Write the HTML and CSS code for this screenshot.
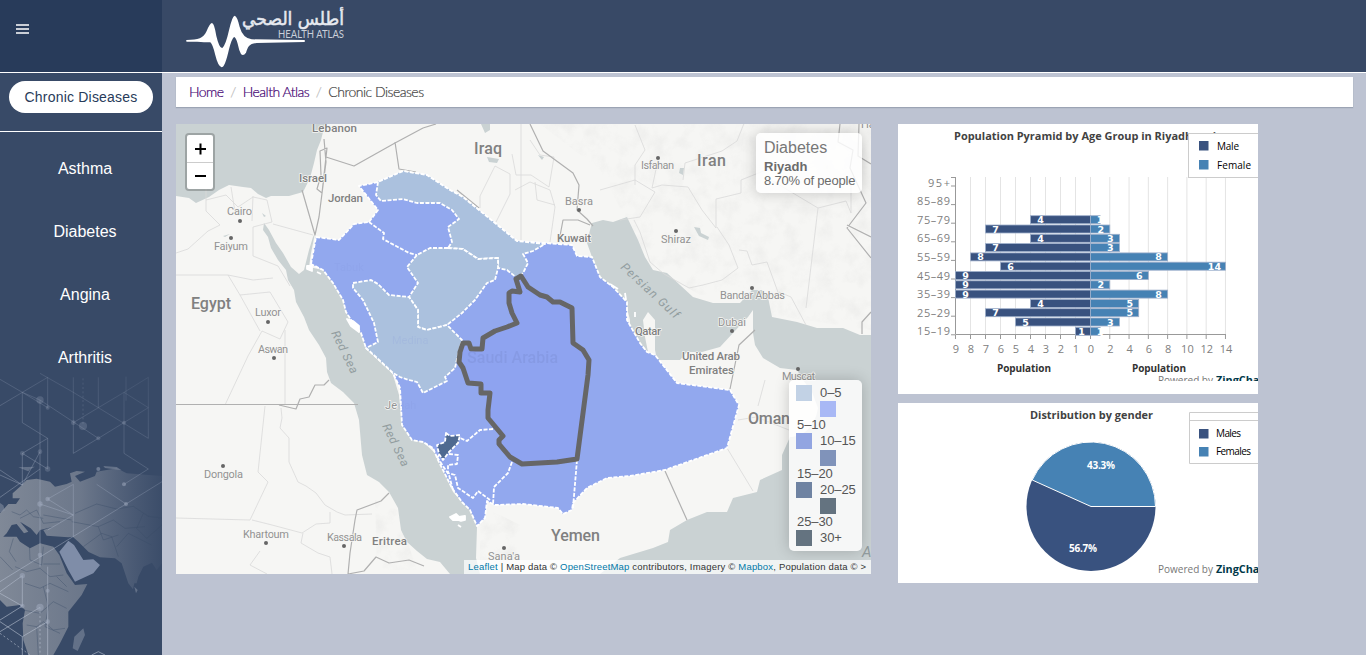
FILE: index.html
```html
<!DOCTYPE html>
<html lang="en">
<head>
<meta charset="utf-8">
<title>Health Atlas</title>
<link rel="stylesheet" href="styles.css">
</head>
<body>
<div class="app">
  <aside class="sidebar">
    <div class="menu-bar"><svg class="burger" viewBox="0 0 13 10"><path d="M0 1h13M0 5h13M0 9h13"/></svg></div>
    <div class="current"><a class="pill">Chronic Diseases</a></div>
    <nav class="nav"><a>Asthma</a><a>Diabetes</a><a>Angina</a><a>Arthritis</a></nav>
    <svg class="globe" viewBox="0 0 486 855">
      <defs>
        <linearGradient id="land" x1="0" x2="1"><stop offset="0" stop-color="#a5a9b0" stop-opacity=".66"/><stop offset=".5" stop-color="#a0a5ae" stop-opacity=".5"/><stop offset="1" stop-color="#8b93a5" stop-opacity=".04"/></linearGradient>
        <linearGradient id="net" gradientUnits="userSpaceOnUse" x1="0" y1="700" x2="380" y2="0"><stop offset="0" stop-color="#b7c0d0" stop-opacity=".6"/><stop offset="1" stop-color="#8e9ab3" stop-opacity=".13"/></linearGradient>
      </defs>
      <path fill="url(#land)" d="M0 430L25 402 48 402 60 385 38 385 38 370 60 350 80 330 110 326 150 335 165 350 200 342 215 335 210 310 230 303 255 305 225 318 240 335 285 318 290 305 350 295 380 310 486 318V580L470 600 456 578 430 590 415 620 410 640 403 640 399 658 385 640 365 580 345 565 300 562 266 546 235 515 218 500 205 502 140 497 130 480 160 470 120 480 110 495 92 475 60 455 85 485 72 490 50 462 35 465 20 490 0 510zM0 500L50 500 60 515 90 535 120 520 160 530 178 555 200 610 225 645 262 642 245 675 205 725 205 770 180 820 160 855H85L70 810 68 760 75 720 60 705 20 710 0 690z"/>
      <path fill="#8c99b4" opacity=".85" d="M178 545L205 512 222 525 250 570 280 568 300 585 280 610 225 635 205 600z"/>
      <path fill="#8e97aa" opacity=".5" d="M250 775l5 20-22 48-15-8 5-35zM55 292l50-2-15 8-5 6-12-5zM310 288l40 3 15 10-50-7zM403 650l10 10-5 10zM-2 398l12 8 5 16-17 6z"/>
      <g class="borders"><path d="M0 560l38 40M40 505l-12 40 20 30M88 520l2 50 35 15 5-55M130 582h50M45 590l35 15 40-10 30 25 40-5M75 640l45 15 30-15 55 25M70 720l50 10 40-35 40 20M80 765l30 5 20-15 30 25 35-5M110 770l5 85M130 650l15 60-10 60 45 20M200 650l-30-30M35 425l25 10 20-15 20 20 30 5M60 445l50-25 20 40 50-5M130 435l85 15M225 430l65-28 60 15 50-8 45 30 40 5M215 455l80 15 45-20 35 25 60-5M250 530l55-40 30 10 20 60M295 470l15 40 45-15M350 530l35-40 70 35M430 430l-20 45 30 30 46-40"/></g>
      <g class="network"><path d="M0 28L67 67 143 22M0 107L67 67 143 113V22M67 67V158L143 205V297L67 250V345L0 300M67 250L143 205M120 90V590M120 90L67 67M120 90L295 205 445 113 372 67V250L445 297M220 22V250L295 205M220 67L295 113 445 205V22L372 67M220 158L372 67M295 22V113M220 67L120 10M378 20V92M0 382L120 297M0 315L67 345 120 245M143 387L220 343V500M143 387L220 435 120 402M143 480L220 435M0 635L378 402 290 343M378 402L486 335M372 343L445 297M0 665L67 617V708L0 670M0 750L67 708M0 785L120 712M0 755L67 800 143 755M143 590V855M67 800V855M275 855L295 845 315 855"/><path stroke-dasharray="6 7" d="M249 25V168M120 712V855M0 790L90 855"/></g>
      <g class="nodes"><circle cx="120" cy="90" r="11"/><circle cx="249" cy="168" r="12"/><circle cx="67" cy="250" r="7"/><circle cx="120" cy="245" r="7"/><circle cx="143" cy="297" r="8"/><circle cx="220" cy="158" r="7"/><circle cx="295" cy="205" r="6"/><circle cx="143" cy="113" r="6"/><circle cx="372" cy="158" r="6"/></g>
      <g class="nodes bright"><circle cx="120" cy="402" r="8"/><circle cx="143" cy="387" r="7"/><circle cx="120" cy="555" r="7"/><circle cx="67" cy="617" r="8"/><circle cx="67" cy="708" r="7"/><circle cx="120" cy="712" r="11"/><circle cx="143" cy="755" r="7"/><circle cx="378" cy="402" r="6"/><circle cx="372" cy="343" r="6"/><circle cx="295" cy="297" r="6"/><circle cx="143" cy="662" r="6"/></g>
    </svg>
  </aside>
  <div class="page">
    <header class="header">
      <svg class="logo" viewBox="186 5 160 65">
        <path transform="translate(180 2) scale(.33333)" fill="#fff" d="M20 114C55 112 70 110 80 87Q90 63 96 63Q103 64 109 102Q118 140 127 138Q137 130 147 85Q157 41 164 41Q172 43 179 75Q188 108 215 112L373 114Q377 117 373 120L230 123C207 125 204 135 198 152Q190 164 183 156Q177 145 173 125Q167 104 162 105Q155 110 147 142Q135 196 125 196Q114 193 106 160Q98 126 91 121C80 120 50 120 20 119Q17 116 20 114z"/>
        <text class="logo-ar" x="344" y="24.500" text-anchor="end" textLength="102" lengthAdjust="spacingAndGlyphs">أطلس الصحي</text>
        <text class="logo-en" x="278" y="37.500" textLength="66" lengthAdjust="spacingAndGlyphs">HEALTH ATLAS</text>
      </svg>
    </header>
    <main class="main">
      <div class="crumbs"><a>Home</a><span class="sep">/</span><a>Health Atlas</a><span class="sep">/</span><span>Chronic Diseases</span></div>
      <div class="content">
        <section class="map">
          <svg class="map-canvas" viewBox="176 124 695 450">
            <defs><filter id="relief" x="0" y="0" width="1" height="1"><feTurbulence type="fractalNoise" baseFrequency=".06" numOctaves="4" seed="4"/><feColorMatrix values="0 0 0 0 .5 0 0 0 0 .5 0 0 0 0 .5 1.300 0 0 0 -.55"/><feComposite in2="SourceAlpha" operator="in"/></filter></defs>
            <rect x="176" y="124" width="695" height="450" fill="#f6f6f4"/>
            <g filter="url(#relief)" opacity=".22"><path fill="#fff" d="M540 124H871V330L770 315 750 290 700 295 650 265 600 170zM480 505l40 20 0 49h-40zM375 500l22 10 20 60h-40z"/></g>
            <g class="water">
              <path d="M176 124H325L321 140 317 150 314 163 310 178 303 192 289 196 271 196 266 198 258 194 251 188 243 187 229 185 219 190 209 197 196 203 189 198 176 196z"/>
              <path d="M264 223L263 230 268 237 271 248 278 260 286 270 288 280 294 290 296 302 304 317 309 330 319 345 326 358 327 372 331 383 343 392 354 403 359 420 362 455 367 475 379 482 389 492 398 508 401 530 407 542 417 551 427 559 440 562 450 574H480L476 558 477 527 470 510 453 492 437 455 423 442 412 440 402 425 399 395 393 375 388 365 376 357 366 348 361 333 353 323 346 312 343 300 333 283 323 270 309 267 311 253 315 233 313 237 309 250 304 270 299 274 291 267 283 253 276 243 269 230z"/>
              <path d="M592 223L603 220 613 222 627 217 638 240 645 257 653 270 667 273 680 285 693 297 713 303 740 303 752 290 762 290 768 297 772 317 797 322 817 328 843 328 860 335 871 335V574H600L620 558 653 548 668 542 670 530 687 520 707 512 727 512 733 498 757 492 760 480 782 470 782 455 790 437C802 437 815 428 818 408L812 392 803 380 797 370 780 368 763 358 755 345 753 333 753 310 748 317 733 333 720 347 702 352 687 352 680 360 657 360 655 350 655 320 648 312 643 320 645 337 648 352 640 343 630 327 630 320 625 300 613 287 600 277 592 257 587 243 590 230zM481 124h9l0 6-5 3zM487 157l12 2-2 4-8-1zM538 155l6 2-2 3zM694 227l6 1 1 5 8 4-1 3-9-4zM680 168l4 0-1 7-4-2zM262 213l4 3-2 1zM223 236l7-2-5 3z"/>
            </g>
            <g class="roads"><path d="M206 189v22l14 14-12 6-20 18-12 4M206 200l20-5 12 12 15-10 14 3 5 22-19 5v29l25 10 12 20M231 187l4 25M253 196l-1 25M273 224l40 11M176 275h52l12 20 20 36M228 275l25 5 20-2M240 295l30-3 18 30-8 17-18-8-14 25-23 49M285 330v74M265 406l-7 66 10 10-18 38-74-2M281 408l1 10-2 10 9 10 0 24 9 20 8 4 10 7 9 12 12 7 8 3 27-1M252 520l20 5 30 8 14-9 14-1v-11M303 533l-2 10 17 10 12 4 2 17M260 551l-10 14 17 9M521 124v120M530 140l10 15 14 2-5 30-18-12-15 0-4-21M480 208v-12l15-30 15 8 0 20-14 28M515 190l15-8 20 8 5 17-5 35M535 182l2 18 18 5M600 190l35-10 20 12-15 25-20 3M635 125l10 25-10 15 0 20M683 180l2-17 37-12 15-10 8-20M658 160l-6 28 10-3 26 2 14 23 14 18 0-29 25-6 0-13 30-12M717 227l12 18 9 23-16 12-19 5-14 3-25-14-14-12-10-30-6-12M739 250l8 1 5 14 15-3 12 33M779 292l12 5 15 28M771 180l47 28-12 100M818 208l28-7 5 12 0-35M765 380l-7 26M738 420l18-3 33 13M727 448l26 43"/></g>
            <g class="boundaries"><path d="M302 190l13 45 4-18 7-55-2-23M326 157l28 9 41-23 28-15M423 128l13-4M395 142l4 27 17 3M457 190l22 18M530 124l13 27 30 22 6 12-2 25 10 9 6 7M560 236l3-16 15 0 12 5M176 404.500h182M279 405l17 4 4-10 9-2 6-12 9 0 5-5M389 493l-8 8-24 9-2 10-5 33-2 21 16-3 12-14 13 6 20-3 15 6M665 471l22 49M730 389l9-44 16-15M859 124l-1 32 13 8M840 124l-2 18 15 8-3 18 16 35-19 25 24 30M847 225l24 12M862 334l0-12 9-10M321 175l-4 14 5 4 5-45-7 3z"/></g>
            <g class="regions">
              <path class="mid" d="M311 264L316 237 339 240 354 224 369 222 378 210 359 186 378 182 403 171 427 175 450 190 463 197 517 241 572 245 577 256 592 257 600 277 613 287 627 302 627 320 640 343 647 352 655 355 677 383 730 390 739 405 727 448 665 470 630 476 607 478 587 488 573 503 572 510 563 514 558 508 523 504 495 505 487 501 485 518 477 526 470 510 462 502 452 488 438 460 433 448 423 442 412 440 402 425 400 388 393 373 376 357 366 348 361 333 353 323 346 312 343 300 333 283 323 270z"/>
              <path class="low" d="M378 182L376 195 381 201 403 199 417 203 440 203 452 210 459 219 448 227 452 242 448 248 463 249 478 259 498 258 498 268 507 270 517 278 523 273 528 263 523 254 533 251 545 244 517 241 463 197 450 190 427 175 403 171z"/>
              <path class="low" d="M448 248L430 248 417 255 407 267 418 283 409 297 418 310 418 327 427 330 447 325 462 313 475 300 487 283 495 280 498 268 498 258 478 259 463 249z"/>
              <path class="low" d="M353 283L371 280 378 284 389 295 409 297 418 310 418 327 427 330 447 325 462 340 458 355 455 368 445 377 447 381 433 388 423 393 417 382 409 380 400 377 393 373 376 357 366 348 378 342 374 323 363 300 353 288z"/>
              <path class="line" d="M369 222L384 233 383 239 409 253 417 255M493 429L480 430 467 441 460 438M437 458l2-3M449 454l9 1-1 9-9 1v8l7 2 3 13 15 10 5-7 12 9M512 462l-4 11-14 14-1 18M577 460l-4 48M437 457l12 18 4 15"/>
              <path class="high" d="M446 433L450 436 460 435 458 443 449 452 443 460 439 454 437 445 445 442z"/>
              <path class="islands" d="M307 266l5 0 0 5-5-2zM317 272l4 2M347 319l6 2 6 5 0 6-8-6zM450 517l6-3 3 3 6-1 0 4-4 1-3-1-5 0zM458 525l3 2M610 284l8 5M625 293l1 7M635 312l0 5"/>
              <path class="selected" d="M521 276L528 287 540 295 547 297 553 302 560 302 572 308 573 343 583 350 589 360 588 375 577 459 557 462 522 464 510 457 499 444 499 440 503 436 488 418 488 410 490 393 481 393 481 384 468 383 463 368 459 362 460 352 463 343 469 343 471 349 482 349 483 338 495 331 507 327 517 323 512 313 509 303 509 293 512 291 520 292 516 279z"/>
            </g>
            <g class="places">
              <text class="country" x="191" y="309" textLength="40">Egypt</text><text class="country" x="474" y="154" textLength="28">Iraq</text><text class="country" x="697" y="166" textLength="29">Iran</text><text class="country" x="748" y="424" textLength="42">Oman</text><text class="country" x="551" y="541" textLength="49">Yemen</text>
              <text class="state" x="312" y="132" textLength="45">Lebanon</text><text class="state" x="299" y="182" textLength="28">Israel</text><text class="state" x="328" y="202" textLength="35">Jordan</text><text class="state" x="557" y="242" textLength="34">Kuwait</text><text class="state" x="635" y="335" textLength="26">Qatar</text><text class="state" x="682" y="360" textLength="58">United Arab</text><text class="state" x="689" y="374" textLength="45">Emirates</text><text class="state" x="372" y="545" textLength="35">Eritrea</text>
              <text class="city" x="227" y="215" textLength="25">Cairo</text><text class="city" x="214" y="250" textLength="34">Faiyum</text><text class="city" x="255" y="316" textLength="26">Luxor</text><text class="city" x="258" y="353" textLength="30">Aswan</text><text class="city" x="204" y="478" textLength="39">Dongola</text><text class="city" x="243" y="538" textLength="46">Khartoum</text><text class="city" x="327" y="541" textLength="35">Kassala</text><text class="city" x="565" y="205" textLength="28">Basra</text><text class="city" x="641" y="169" textLength="33">Isfahan</text><text class="city" x="661" y="243" textLength="30">Shiraz</text><text class="city" x="720" y="299" textLength="65">Bandar Abbas</text><text class="city" x="718" y="326" textLength="28">Dubai</text><text class="city" x="782" y="380" textLength="33">Muscat</text><text class="city" x="488" y="560" textLength="32">Sana'a</text><text class="city" x="385" y="409" textLength="12">Je</text><text class="city" x="861" y="128">Ha</text>
              <g class="dots"><circle cx="240" cy="221" r="2"/><circle cx="231" cy="238" r="2"/><circle cx="268" cy="322" r="2"/><circle cx="274" cy="358" r="2"/><circle cx="223" cy="466" r="2"/><circle cx="266" cy="543" r="2"/><circle cx="344" cy="546" r="2"/><circle cx="579" cy="210" r="2"/><circle cx="658" cy="158" r="2"/><circle cx="676" cy="231" r="2"/><circle cx="752" cy="288" r="2"/><circle cx="732" cy="331" r="2"/><circle cx="798" cy="369" r="2"/><circle cx="504" cy="548" r="2"/></g>
              <text class="sea" transform="translate(331 333) rotate(64)" textLength="46">Red Sea</text><text class="sea" transform="translate(382 426) rotate(64)" textLength="46">Red Sea</text><text class="sea gulf" transform="translate(620 268) rotate(43)" textLength="75">Persian Gulf</text><text class="sea big" x="862" y="557">A</text>
              <text class="ghost" x="467" y="363" textLength="91">Saudi Arabia</text><text class="ghost small" x="334" y="271">Tabuk</text><text class="ghost small" x="392" y="344">Medina</text><text class="ghost small" x="398" y="409">dah</text>
            </g>
          </svg>
          <div class="zoom"><a><svg viewBox="0 0 12 12"><path d="M1 6h11M6.500 .5v11"/></svg></a><a><svg viewBox="0 0 12 12"><path d="M1 6h11"/></svg></a></div>
          <div class="info"><h4>Diabetes</h4><b>Riyadh</b><span>8.70% of people</span></div>
          <div class="legend">
            <div class="row"><i class="c0"></i><span>0–5</span></div><div class="row shift"><i class="c1"></i></div><div class="row"><span>5–10</span></div>
            <div class="row"><i class="c2"></i><span>10–15</span></div><div class="row shift"><i class="c3"></i></div><div class="row"><span>15–20</span></div>
            <div class="row"><i class="c4"></i><span>20–25</span></div><div class="row shift"><i class="c5"></i></div><div class="row"><span>25–30</span></div>
            <div class="row"><i class="c5"></i><span>30+</span></div>
          </div>
          <div class="credit"><a>Leaflet</a> | Map data © <a>OpenStreetMap</a> contributors, Imagery © <a>Mapbox</a>, Population data © &gt;</div>
        </section>
        <section class="charts">
          <svg class="chart pyramid" viewBox="898 124 360 270">
            <text class="title" x="954" y="140" textLength="276" lengthAdjust="spacingAndGlyphs">Population Pyramid by Age Group in Riyadh region</text>
            <g id="plot"></g>
            <rect class="box" x="1188.500" y="133.500" width="80" height="44"/>
            <rect class="male" x="1199" y="141" width="9.500" height="9.500"/><rect class="female" x="1199" y="160" width="9.500" height="9.500"/>
            <text class="key" x="1217" y="150" textLength="22">Male</text><text class="key" x="1217" y="169" textLength="34">Female</text>
            <text class="axis-title" x="997" y="372" textLength="54">Population</text><text class="axis-title" x="1132" y="372" textLength="54">Population</text>
            <svg x="898" y="370" width="360" height="11" viewBox="898 370 360 11"><text class="powered" x="1158" y="384" textLength="55">Powered by</text><text class="brand" x="1216" y="384" textLength="53" lengthAdjust="spacingAndGlyphs">ZingChart</text></svg>
          </svg>
          <svg class="chart pie" viewBox="898 403 360 180">
            <text class="title" x="1030" y="419" textLength="123" lengthAdjust="spacingAndGlyphs">Distribution by gender</text>
            <path class="box" d="M1260 412.500H1189.500V463.500H1260M1189.500 420.500H1260"/>
            <rect class="male" x="1199" y="429" width="9.500" height="9.500"/><rect class="female" x="1199" y="447" width="9.500" height="9.500"/>
            <text class="key" x="1216" y="437" textLength="25">Males</text><text class="key" x="1216" y="455" textLength="35">Females</text>
            <circle class="male" cx="1091" cy="506.500" r="64.500"/>
            <path class="female slice" d="M1091 506.500H1155.500A64.500 64.500 0 0 0 1032.200 480z"/>
            <text class="share" x="1087" y="469" textLength="28">43.3%</text><text class="share" x="1069" y="552" textLength="28">56.7%</text>
            <text class="powered" x="1158" y="573" textLength="55">Powered by</text><text class="brand" x="1216" y="573" textLength="53" lengthAdjust="spacingAndGlyphs">ZingChart</text>
          </svg>
        </section>
      </div>
    </main>
  </div>
</div>
<script src="chart.js"></script>
</body>
</html>
```
FILE: styles.css
```css
* { box-sizing: border-box; }
body { margin: 0; font-family: "Liberation Sans", Arial, sans-serif; background: #bdc3d2; overflow: hidden; }
.app { display: flex; height: 655px; }
.sidebar { position: relative; width: 162px; background: #384a67; color: #fff; flex: none; overflow: hidden; }
.menu-bar { height: 73px; background: #283b5a; border-bottom: 1px solid #fff; padding: 24px 16px; }
.burger { display: block; width: 13px; height: 10px; stroke: #fff; stroke-width: 1.7; }
.current { height: 59px; padding: 8px 9px; border-bottom: 1px solid #fff; }
.pill { display: block; height: 32px; border-radius: 16px; background: #fff; color: #283b5a; text-align: center; font-size: 14px; line-height: 32px; letter-spacing: .2px; }
.nav { display: flex; flex-direction: column; padding: 5px 0 0 8px; text-align: center; font-size: 16px; }
.nav a { height: 63px; line-height: 63px; }
.globe { position: absolute; left: 0; bottom: 0; width: 162px; height: 285px; }
.borders { fill: none; stroke: #384a67; stroke-width: 2.5; opacity: .45; }
.network { fill: none; stroke: url(#net); stroke-width: 3; }
.nodes { fill: #a2acc0; opacity: .25; }
.nodes.bright { opacity: .5; }
.page { flex: 1; min-width: 0; }
.header { height: 73px; background: #384966; border-bottom: 1px solid #fff; padding: 5px 0 0 24px; }
.logo { display: block; width: 160px; height: 65px; overflow: visible; }
.logo-ar { font: 18px "DejaVu Sans", sans-serif; fill: #e7eaf0; stroke: #e7eaf0; stroke-width: .5px; }
.logo-en { font: 11.500px Lato, sans-serif; fill: #c9cfd9; }
.main { padding: 4px 13px 0 14px; }
.crumbs { display: flex; height: 30px; background: #fff; box-shadow: 0 1px 1px rgba(60,70,90,.25); padding-left: 13px; font: 300 14px/29px Lato, sans-serif; color: #444; letter-spacing: -.52px; -webkit-text-stroke: .2px currentColor; }
.crumbs a { color: #3f0070; }
.sep { color: #bbb; padding: 0 7px 0 6.500px; }
.content { display: flex; gap: 27px; margin-top: 17px; align-items: flex-start; }
.map { position: relative; width: 695px; height: 450px; overflow: hidden; }
.map-canvas { display: block; width: 695px; height: 450px; }
.water { fill: #cad2d3; }
.roads, .boundaries { fill: none; stroke: #d9d9d9; stroke-width: .8; stroke-linejoin: round; }
.boundaries { stroke: #b0b0b0; stroke-width: 1.2; }
.regions path { stroke: #fff; stroke-width: 1.800; stroke-dasharray: 4 1.500; stroke-linejoin: round; }
.regions .mid { fill: #92a8ee; }
.regions .low { fill: #abc1de; }
.regions .high { fill: #4e6990; }
.regions .line { fill: none; }
.regions .islands { fill: #fff; stroke-dasharray: none; }
.regions .selected { fill: #8ea3f0; stroke: #666; stroke-width: 5; stroke-dasharray: none; }
.places { font-family: Roboto, sans-serif; fill: #808080; paint-order: stroke; stroke: #f6f6f4; stroke-width: 1.500px; stroke-linejoin: round; }
.country { font-size: 16px; font-weight: 500; }
.state { font-size: 11.500px; font-weight: 500; }
.city { font-size: 11px; fill: #929292; }
.dots { fill: #666; stroke: none; }
.sea { font-size: 12px; font-style: italic; fill: #929d9f; stroke: none; }
.sea.big { font-size: 15px; }
.ghost { font-size: 16px; font-weight: 500; fill: #7f92da; opacity: .5; stroke: none; }
.ghost.small { font-size: 11px; font-weight: 400; opacity: .15; }
.zoom { position: absolute; left: 9px; top: 9px; width: 30px; height: 58px; border: 2px solid rgba(0,0,0,.22); border-radius: 4px; background: #fff; background-clip: padding-box; }
.zoom a { display: flex; height: 27px; align-items: center; justify-content: center; }
.zoom a + a { border-top: 1px solid #ccc; }
.zoom svg { width: 12px; height: 12px; stroke: #000; stroke-width: 2; }
.info { position: absolute; right: 9px; top: 9px; width: 106px; height: 60px; padding: 4px 8px; background: rgba(255,255,255,.82); box-shadow: 0 0 15px rgba(0,0,0,.2); border-radius: 5px; color: #6b6b6b; font-size: 13px; line-height: 14px; white-space: nowrap; }
.info h4 { margin: 0 0 2px; font-size: 16px; font-weight: 400; line-height: 21px; color: #777; }
.info b, .info span { display: block; }
.info span { letter-spacing: -.18px; }
.legend { position: absolute; right: 9px; top: 256px; width: 73px; height: 171px; padding: 5px 7px; background: rgba(255,255,255,.82); box-shadow: 0 0 15px rgba(0,0,0,.2); border-radius: 5px; color: #555; font: 13px/15px "Liberation Sans", sans-serif; white-space: nowrap; letter-spacing: -.1px; }
.row { display: flex; gap: 8px; height: 16.150px; }
.row > span:first-child { padding-left: 1px; }
.shift { padding-left: 24px; }
.row i { width: 16px; height: 16px; flex: none; }
.c0 { background: #c2d2e5; }
.c1 { background: #a8b8f5; }
.c2 { background: #92a5e1; }
.c3 { background: #8093ba; }
.c4 { background: #6f83a2; }
.c5 { background: #647380; }
.credit { position: absolute; right: 0; bottom: 0; width: 407px; height: 14px; padding-left: 4px; background: rgba(255,255,255,.72); color: #333; font-size: 9.500px; line-height: 14px; white-space: nowrap; letter-spacing: .185px; }
.credit a { color: #0078a8; }
.charts { display: flex; flex-direction: column; gap: 9px; }
.chart { display: block; width: 360px; background: #fff; overflow: hidden; font-family: "Open Sans", sans-serif; }
.pyramid { height: 270px; }
.pie { height: 180px; }
.title { font-size: 11px; font-weight: 700; fill: #424242; }
.axis-title { font-size: 10px; font-weight: 700; fill: #333; }
.key { font-size: 10px; fill: #000; }
.powered { font-size: 10px; fill: #777; }
.brand { font-size: 10.500px; font-weight: 700; fill: #003849; }
.share, .value { font-size: 10px; font-weight: 700; fill: #fff; }
.value { font: 700 9.500px "DejaVu Sans", sans-serif; text-anchor: middle; }
.box { fill: #fff; stroke: #ccc; }
.male { fill: #39527f; }
.female { fill: #4682b4; }
.slice { stroke: #fff; stroke-width: 1; }
.bar { stroke: #9fb0cb; stroke-width: .8; }
.grid { stroke: #e4e4e4; stroke-width: 1; }
.axis { stroke: #999; fill: none; }
.tick { font-size: 11px; fill: #808080; }
```
FILE: chart.js
```js
const plot = document.getElementById('plot');
const rows = [[1,1],[5,3],[7,5],[4,5],[9,8],[9,2],[9,6],[6,14],[8,8],[7,3],[4,3],[7,2],[4,1]];
const ages = ['15–19','25–29','35–39','45–49','55–59','65–69','75–79','85–89','95+'];
const zero = 1090.5, left = 15, right = 9.64;
let out = '';
const tick = (x, n) => {
  out += `<path class="grid" d="M${x} 177V334"/><path class="axis" d="M${x} 335v4"/>`;
  out += `<text class="tick" x="${x + .5}" y="353" text-anchor="middle">${n}</text>`;
};
for (let n = 9; n >= 0; n--) tick(zero - n * left, n);
for (let n = 2; n <= 14; n += 2) tick(zero + n * right, n);
out += '<path class="axis" d="M955.5 177V334.5H1226"/>';
ages.forEach((age, i) => {
  const y = 331.3 - i * 18.6;
  out += `<text class="tick" x="950" y="${y + 4}" text-anchor="end" textLength="${age === '95+' ? 22 : 33}">${age}</text><path class="axis" d="M951 ${y + 3.5}h4"/>`;
});
out += '<path class="axis" d="M951 177.500h4"/>';
rows.forEach(([m, f], i) => {
  const y = 331.3 - i * 9.3;
  out += `<rect class="male bar" x="${zero - m * left}" y="${y - 4}" width="${m * left}" height="8"/>`;
  out += `<rect class="female bar" x="${zero}" y="${y - 4}" width="${f * right}" height="8"/>`;
  out += `<text class="value" x="${zero - m * left + (m === 1 ? 6 : 10)}" y="${y + 3.5}">${m}</text>`;
  out += `<text class="value" x="${zero + f * right - (f === 1 ? 0 : f === 14 ? 11 : 9)}" y="${y + 3.5}">${f}</text>`;
});
plot.innerHTML = out;
```
